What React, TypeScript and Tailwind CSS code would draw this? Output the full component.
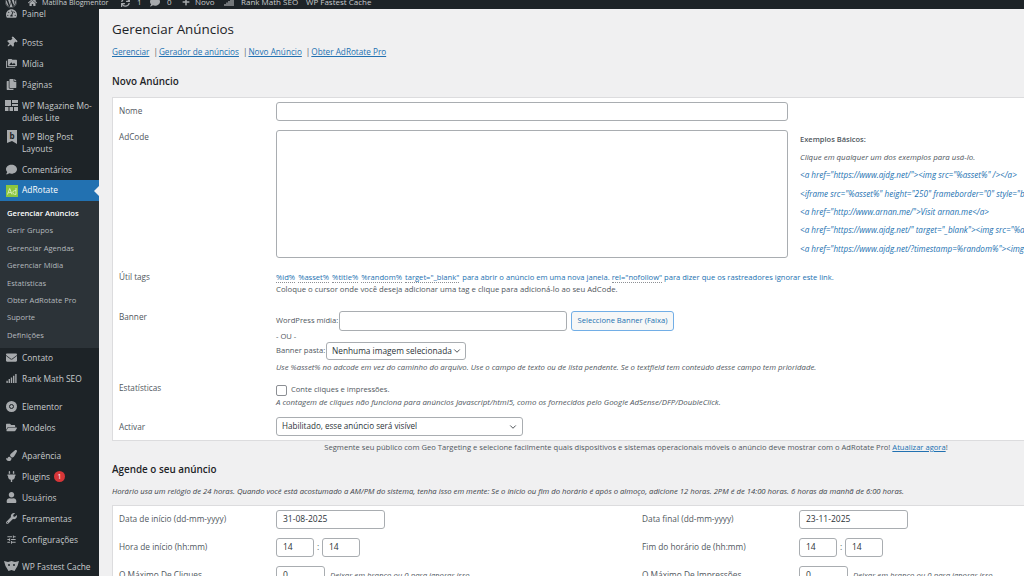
import type { ReactNode } from "react";
import { ChevronDown } from "lucide-react";
import {
  FaComment,
  FaCopy,
  FaEnvelope,
  FaFolderOpen,
  FaHome,
  FaPaintBrush,
  FaPlug,
  FaPlus,
  FaSignal,
  FaSync,
  FaTachometerAlt,
  FaThumbtack,
  FaUser,
  FaWordpress,
  FaWrench,
} from "react-icons/fa";
import { MdPermMedia, MdTune } from "react-icons/md";

const SUBMENU = [
  "Gerenciar Anúncios",
  "Gerir Grupos",
  "Gerenciar Agendas",
  "Gerenciar Mídia",
  "Estatísticas",
  "Obter AdRotate Pro",
  "Suporte",
  "Definições",
];

const EXAMPLES = [
  '<a href="https://www.ajdg.net/"><img src="%asset%" /></a>',
  '<iframe src="%asset%" height="250" frameborder="0" style="border:none;"></iframe>',
  '<a href="http://www.arnan.me/">Visit arnan.me</a>',
  '<a href="https://www.ajdg.net/" target="_blank"><img src="%asset%" /></a>',
  '<a href="https://www.ajdg.net/?timestamp=%random%"><img src="%asset%" /></a>',
];

const TAGS = ["%id%", "%asset%", "%title%", "%random%", 'target="_blank"'];

function MenuItem({ icon, children, className = "" }: { icon: ReactNode; children: ReactNode; className?: string }) {
  return (
    <div className={`flex items-start text-[8.4px] leading-[11.5px] text-[#c8cbcd] ${className}`}>
      <span className="flex h-[11.5px] w-[22px] shrink-0 items-center justify-center pl-[1px] text-[11px] text-[#a7aaad]">{icon}</span>
      <span>{children}</span>
    </div>
  );
}

function Sidebar() {
  return (
    <aside className="w-[99px] shrink-0 overflow-hidden bg-[#1d2327]">
      <MenuItem icon={<FaTachometerAlt />} className="mt-[-1px] h-[21px]">Painel</MenuItem>
      <div className="h-[4px]" />
      <MenuItem icon={<FaThumbtack className="rotate-45" />} className="h-[21px] pt-[4px]">Posts</MenuItem>
      <MenuItem icon={<MdPermMedia />} className="h-[21px] pt-[4px]">Mídia</MenuItem>
      <MenuItem icon={<FaCopy />} className="h-[21px] pt-[4px]">Páginas</MenuItem>
      <MenuItem
        icon={
          <svg width="13" height="12" viewBox="0 0 13 12" fill="#a7aaad">
            <rect x="0" y="0" width="6" height="6" />
            <rect x="7" y="0" width="6" height="3" />
            <rect x="7" y="4" width="6" height="2" />
            <rect x="0" y="7" width="3.5" height="4" />
            <rect x="4.5" y="7" width="3.5" height="4" />
            <rect x="9" y="7" width="4" height="4" />
          </svg>
        }
        className="h-[31px] pt-[4px]"
      >
        WP Magazine Mo-
        <br />
        dules Lite
      </MenuItem>
      <MenuItem
        icon={
          <svg width="12" height="14" viewBox="0 0 12 14">
            <path d="M1 0h10v14l-5-3-5 2z" fill="#a7aaad" />
            <text x="3.5" y="8.5" fontSize="8" fontWeight="700" fontFamily="'Open Sans', sans-serif" fill="#1d2327">b</text>
          </svg>
        }
        className="h-[32px] pt-[4px]"
      >
        WP Blog Post
        <br />
        Layouts
      </MenuItem>
      <MenuItem icon={<FaComment />} className="h-[21px] pt-[5px]">Comentários</MenuItem>
      <div className="relative flex h-[21px] items-center bg-[#2271b1] text-[8.4px] text-white">
        <span className="flex w-[22px] shrink-0 justify-center pl-[1px]">
          <svg width="12" height="12" viewBox="0 0 12 12">
            <rect width="12" height="12" fill="#8cc63f" />
            <path d="M1.5 9.5L3.7 3.5 6 9.5M2.4 7.6h2.7M10 3v6.5M10 9.3H8.6a1.5 1.5 0 0 1 0-3.6H10" stroke="#e8f5d0" strokeWidth="0.8" fill="none" />
          </svg>
        </span>
        AdRotate
        <span className="absolute right-0 top-[6px] h-0 w-0 border-y-[5px] border-r-[5px] border-y-transparent border-r-[#f0f0f1]" />
      </div>
      <div className="flex flex-col gap-[5.4px] bg-[#2c3338] pb-[7px] pl-[7px] pt-[6px] text-[7.6px] leading-[12px] text-[#b4b9be]">
        {SUBMENU.map((label, i) => (
          <div key={label} className={i === 0 ? "font-semibold text-white" : ""}>{label}</div>
        ))}
      </div>
      <MenuItem icon={<FaEnvelope />} className="h-[21px] pt-[4px]">Contato</MenuItem>
      <MenuItem icon={<FaSignal />} className="h-[21px] pt-[4px]">Rank Math SEO</MenuItem>
      <div className="h-[7px]" />
      <MenuItem
        icon={
          <span className="flex h-[11px] w-[11px] items-center justify-center rounded-full bg-[#a7aaad]">
            <span className="h-[5px] w-[5px] rounded-full border border-[#1d2327]" />
          </span>
        }
        className="h-[21px] pt-[4px]"
      >
        Elementor
      </MenuItem>
      <MenuItem icon={<FaFolderOpen />} className="h-[21px] pt-[4px]">Modelos</MenuItem>
      <div className="h-[7px]" />
      <MenuItem icon={<FaPaintBrush />} className="h-[21px] pt-[4px]">Aparência</MenuItem>
      <MenuItem icon={<FaPlug />} className="h-[21px] pt-[4px]">
        <span className="flex items-center">
          Plugins
          <span className="ml-[4px] flex h-[11px] w-[11px] items-center justify-center rounded-full bg-[#d63638] text-[7px] leading-none text-white">1</span>
        </span>
      </MenuItem>
      <MenuItem icon={<FaUser />} className="h-[21px] pt-[4px]">Usuários</MenuItem>
      <MenuItem icon={<FaWrench />} className="h-[21px] pt-[4px]">Ferramentas</MenuItem>
      <MenuItem icon={<MdTune />} className="h-[21px] pt-[4px]">Configurações</MenuItem>
      <div className="h-[6px]" />
      <MenuItem
        icon={
          <svg width="15" height="12" viewBox="0 0 15 12" fill="#a7aaad">
            <path d="M0 1l4 1 3.5-1 3.5 1 4-1-1.5 5-3 5-3-1-3 1-3-5z" />
            <circle cx="5" cy="5" r="1" fill="#1d2327" />
            <circle cx="10" cy="5" r="1" fill="#1d2327" />
          </svg>
        }
        className="h-[21px] pt-[4px]"
      >
        WP Fastest Cache
      </MenuItem>
    </aside>
  );
}

function TopBar() {
  return (
    <header className="box-border flex h-[9px] shrink-0 items-center overflow-hidden bg-[#1d2327] pb-[5px] pl-[5px] text-[8px] text-[#c8cbcd]">
      <FaWordpress className="w-[12px] shrink-0 text-[12px] text-[#a7aaad]" />
      <FaHome className="ml-[11px] w-[9px] shrink-0 text-[9px] text-[#a7aaad]" />
      <span className="ml-[5px] w-[67px] shrink-0 whitespace-nowrap text-[7.2px]">Matilha Blogmentor</span>
      <FaSync className="ml-[12px] w-[9px] shrink-0 text-[9px] text-[#a7aaad]" />
      <span className="ml-[7px] w-[5px] shrink-0">1</span>
      <FaComment className="ml-[8px] w-[10px] shrink-0 text-[10px] text-[#a7aaad]" />
      <span className="ml-[7px] w-[5px] shrink-0">0</span>
      <FaPlus className="ml-[10px] w-[8px] shrink-0 text-[8px] text-[#a7aaad]" />
      <span className="ml-[5px] w-[19px] shrink-0">Novo</span>
      <FaSignal className="ml-[10px] w-[10px] shrink-0 text-[10px] text-[#a7aaad]" />
      <span className="ml-[7px] w-[55px] shrink-0 whitespace-nowrap">Rank Math SEO</span>
      <span className="ml-[10px] whitespace-nowrap">WP Fastest Cache</span>
    </header>
  );
}

function FieldRow({ label, labelClass = "", children, className = "" }: { label: string; labelClass?: string; children: ReactNode; className?: string }) {
  return (
    <div className={`flex items-start ${className}`}>
      <div className={`w-[157px] shrink-0 text-[8.2px] leading-[12px] ${labelClass}`}>{label}</div>
      <div className="min-w-0 flex-1">{children}</div>
    </div>
  );
}

function TextBox({ className = "", value }: { className?: string; value?: string }) {
  return (
    <div className={`box-border flex items-center rounded-[3px] border border-[#a9adb1] bg-white px-[6px] text-[#2c3338] ${className}`}>
      {value}
    </div>
  );
}

function SelectBox({ value, className = "" }: { value: string; className?: string }) {
  return (
    <div className={`box-border flex items-center justify-between rounded-[3px] border border-[#a9adb1] bg-white pl-[5px] pr-[4px] text-[#2c3338] ${className}`}>
      <span className="whitespace-nowrap">{value}</span>
      <ChevronDown size={10} strokeWidth={2} className="shrink-0" />
    </div>
  );
}

function NewAdBox() {
  return (
    <div className="box-border h-[344px] w-[930px] border border-[#dcdcde] bg-white pl-[6px] pt-[4px]">
      <FieldRow label="Nome" labelClass="pt-[3px]">
        <TextBox className="h-[19px] w-[512px]" />
      </FieldRow>
      <FieldRow label="AdCode" labelClass="pt-[1px]" className="mt-[9px]">
        <div className="flex items-start">
          <div className="box-border h-[128px] w-[512px] shrink-0 rounded-[3px] border border-[#a9adb1] bg-white" />
          <div className="ml-[12px] flex flex-col gap-[6.4px] whitespace-nowrap pt-[2.5px] text-[8.1px] leading-[12px]">
            <b className="text-[7.5px] font-semibold">Exemplos Básicos:</b>
            <i className="text-[7.9px]">Clique em qualquer um dos exemplos para usá-lo.</i>
            {EXAMPLES.map((code) => (
              <i key={code} className="text-[#2271b1]">{code}</i>
            ))}
          </div>
        </div>
      </FieldRow>
      <FieldRow label="Útil tags" className="mt-[13px]">
        <div className="whitespace-nowrap text-[7.6px] leading-[12px]">
          <div className="text-[#2271b1]">
            {TAGS.map((tag) => (
              <span key={tag} className="mr-[3px] border-b border-dotted border-[#8c8f94]">{tag}</span>
            ))}
            para abrir o anúncio em uma nova janela.{" "}
            <span className="border-b border-dotted border-[#8c8f94]">rel="nofollow"</span> para dizer que os rastreadores ignorar este link.
          </div>
          <div className="text-[7.75px]">Coloque o cursor onde você deseja adicionar uma tag e clique para adicioná-lo ao seu AdCode.</div>
        </div>
      </FieldRow>
      <FieldRow label="Banner" className="mt-[16px]">
        <div className="flex h-[20px] items-center whitespace-nowrap text-[7.6px]">
          <span className="w-[63px] shrink-0">WordPress mídia:</span>
          <TextBox className="h-[20px] w-[228px] shrink-0" />
          <div className="ml-[4px] box-border flex h-[20px] w-[103px] shrink-0 items-center justify-center rounded-[3px] border border-[#72aee6] bg-[#f6f7f7] text-[#2271b1]">
            Seleccione Banner (Faixa)
          </div>
        </div>
        <div className="text-[7.6px] leading-[11px]">- OU -</div>
        <div className="flex h-[18px] items-center whitespace-nowrap">
          <span className="w-[50px] shrink-0 text-[7.6px]">Banner pasta:</span>
          <SelectBox value="Nenhuma imagem selecionada" className="h-[18px] w-[140px] shrink-0 text-[8.3px]" />
        </div>
        <div className="mt-[1px] whitespace-nowrap text-[7.8px] italic leading-[12px]">
          Use %asset% no adcode em vez do caminho do arquivo. Use o campo de texto ou de lista pendente. Se o textfield tem conteúdo desse campo tem prioridade.
        </div>
      </FieldRow>
      <FieldRow label="Estatísticas" labelClass="mt-[-2px]" className="mt-[11px]">
        <div className="flex h-[12px] items-center whitespace-nowrap text-[7.6px]">
          <span className="mr-[4px] box-border h-[11px] w-[11px] shrink-0 rounded-[2px] border border-[#8c8f94] bg-white" />
          Conte cliques e impressões.
        </div>
        <div className="whitespace-nowrap text-[7.9px] italic leading-[12px]">
          A contagem de cliques não funciona para anúncios Javascript/html5, como os fornecidos pelo Google AdSense/DFP/DoubleClick.
        </div>
      </FieldRow>
      <FieldRow label="Activar" labelClass="pt-[4px]" className="mt-[9px]">
        <SelectBox value="Habilitado, esse anúncio será visível" className="h-[19px] w-[247px] text-[8.1px]" />
      </FieldRow>
    </div>
  );
}

function TimeFields({ hours, minutes }: { hours: string; minutes: string }) {
  return (
    <div className="flex items-center">
      <TextBox value={hours} className="h-[19px] w-[38px]" />
      <span className="w-[8px] text-center">:</span>
      <TextBox value={minutes} className="h-[19px] w-[38px]" />
    </div>
  );
}

function ScheduleRow({ label, children, className = "" }: { label: string; children: ReactNode; className?: string }) {
  return (
    <div className={`flex h-[19px] items-center whitespace-nowrap ${className}`}>
      <span className="w-[157px] shrink-0 text-[8.3px]">{label}</span>
      {children}
    </div>
  );
}

function ScheduleBox() {
  return (
    <div className="box-border grid w-[930px] grid-cols-[523px_1fr] gap-y-[9px] border border-[#dcdcde] bg-white pl-[6px] pt-[4px]">
      <ScheduleRow label="Data de início (dd-mm-yyyy)">
        <TextBox value="31-08-2025" className="h-[19px] w-[109px]" />
      </ScheduleRow>
      <ScheduleRow label="Data final (dd-mm-yyyy)">
        <TextBox value="23-11-2025" className="h-[19px] w-[109px]" />
      </ScheduleRow>
      <ScheduleRow label="Hora de início (hh:mm)">
        <TimeFields hours="14" minutes="14" />
      </ScheduleRow>
      <ScheduleRow label="Fim do horário de (hh:mm)">
        <TimeFields hours="14" minutes="14" />
      </ScheduleRow>
      <ScheduleRow label="O Máximo De Cliques">
        <TextBox value="0" className="h-[19px] w-[49px]" />
        <i className="ml-[5px] text-[7.8px]">Deixar em branco ou 0 para ignorar isso.</i>
      </ScheduleRow>
      <ScheduleRow label="O Máximo De Impressões">
        <TextBox value="0" className="h-[19px] w-[49px]" />
        <i className="ml-[5px] text-[7.8px]">Deixar em branco ou 0 para ignorar isso.</i>
      </ScheduleRow>
    </div>
  );
}

export default function App() {
  return (
    <div className="flex h-[576px] w-[1024px] flex-col overflow-hidden bg-[#f0f0f1] font-['Open_Sans','Noto_Sans',sans-serif] text-[8.5px] text-[#50575e]">
      <TopBar />
      <div className="flex min-h-0 flex-1">
        <Sidebar />
        <main className="min-w-0 flex-1 overflow-hidden pl-[13px]">
          <h1 className="mt-[10px] text-[13.4px] leading-[20px] text-[#1d2327]">Gerenciar Anúncios</h1>
          <nav className="mt-[7px] flex h-[12px] items-center gap-[1px] whitespace-nowrap text-[8.2px] leading-[12px] text-[#2271b1]">
            <span className="underline">Gerenciar</span>
            <span className="ml-[3px] text-[#50575e]">|</span>
            <span className="underline">Gerador de anúncios</span>
            <span className="ml-[3px] text-[#50575e]">|</span>
            <span className="underline">Novo Anúncio</span>
            <span className="ml-[3px] text-[#50575e]">|</span>
            <span className="underline">Obter AdRotate Pro</span>
          </nav>
          <h2 className="mt-[16px] text-[9.9px] font-semibold leading-[14px] text-[#1d2327]">Novo Anúncio</h2>
          <div className="mt-[9px]">
            <NewAdBox />
          </div>
          <p className="w-[1048px] whitespace-nowrap text-center text-[7.6px] leading-[12px]">
            Segmente seu público com Geo Targeting e selecione facilmente quais dispositivos e sistemas operacionais móveis o anúncio deve mostrar com o AdRotate Pro!{" "}
            <span className="text-[#2271b1] underline">Atualizar agora</span>!
          </p>
          <h2 className="mt-[9px] text-[9.9px] font-semibold leading-[14px] text-[#1d2327]">Agende o seu anúncio</h2>
          <p className="mt-[9px] whitespace-nowrap text-[7.7px] italic leading-[12px] text-[#3c434a]">
            Horário usa um relógio de 24 horas. Quando você está acostumado a AM/PM do sistema, tenha isso em mente: Se o início ou fim do horário é após o almoço, adicione 12 horas. 2PM é de 14:00 horas. 6 horas da manhã de 6:00 horas.
          </p>
          <div className="mt-[8px]">
            <ScheduleBox />
          </div>
        </main>
      </div>
    </div>
  );
}
